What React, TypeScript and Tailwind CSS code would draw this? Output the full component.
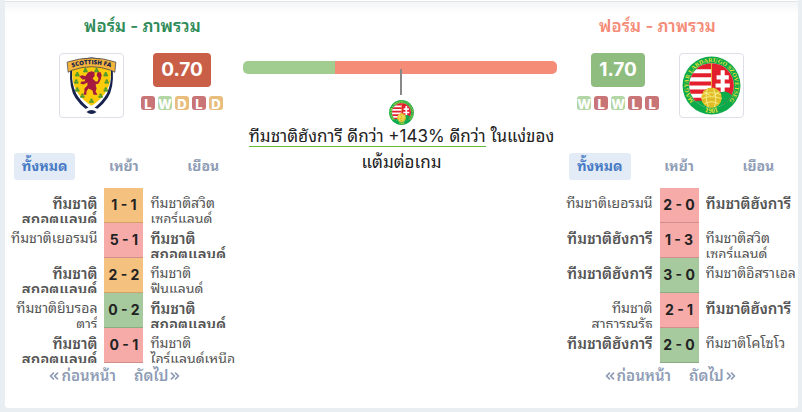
import clsx from 'clsx';
import { ChevronsLeft, ChevronsRight } from 'lucide-react';

type Result = 'W' | 'D' | 'L';

interface Match {
  home: string[];
  away: string[];
  score: string;
  result: Result;
  side: 'home' | 'away';
}

interface TeamFormProps {
  id: string;
  titleClass: string;
  points: string;
  pointsClass: string;
  form: Result[];
  logo: React.ReactNode;
  logoLast?: boolean;
  matches: Match[];
}

const badgeColors = {
  W: 'bg-[#b3d6a5]',
  D: 'bg-[#e9bd7c]',
  L: 'bg-[#c97577]',
};

const scoreColors = {
  W: 'bg-[#a6ca9e] border-[#89ad81]',
  D: 'bg-[#f5c17f] border-[#cfa26c]',
  L: 'bg-[#f6aba9] border-[#cf8f8d]',
};

const scotlandMatches: Match[] = [
  { home: ['ทีมชาติ', 'สกอตแลนด์'], away: ['ทีมชาติสวิต', 'เซอร์แลนด์'], score: '1 - 1', result: 'D', side: 'home' },
  { home: ['ทีมชาติเยอรมนี'], away: ['ทีมชาติ', 'สกอตแลนด์'], score: '5 - 1', result: 'L', side: 'away' },
  { home: ['ทีมชาติ', 'สกอตแลนด์'], away: ['ทีมชาติ', 'ฟินแลนด์'], score: '2 - 2', result: 'D', side: 'home' },
  { home: ['ทีมชาติยิบรอล', 'ตาร์'], away: ['ทีมชาติ', 'สกอตแลนด์'], score: '0 - 2', result: 'W', side: 'away' },
  { home: ['ทีมชาติ', 'สกอตแลนด์'], away: ['ทีมชาติ', 'ไอร์แลนด์เหนือ'], score: '0 - 1', result: 'L', side: 'home' },
];

const hungaryMatches: Match[] = [
  { home: ['ทีมชาติเยอรมนี'], away: ['ทีมชาติฮังการี'], score: '2 - 0', result: 'L', side: 'away' },
  { home: ['ทีมชาติฮังการี'], away: ['ทีมชาติสวิต', 'เซอร์แลนด์'], score: '1 - 3', result: 'L', side: 'home' },
  { home: ['ทีมชาติฮังการี'], away: ['ทีมชาติอิสราเอล'], score: '3 - 0', result: 'W', side: 'home' },
  { home: ['ทีมชาติ', 'สาธารณรัฐ'], away: ['ทีมชาติฮังการี'], score: '2 - 1', result: 'L', side: 'away' },
  { home: ['ทีมชาติฮังการี'], away: ['ทีมชาติโคโซโว'], score: '2 - 0', result: 'W', side: 'home' },
];

const clovers = [
  [25, 16], [36, 16], [17, 20], [45, 20], [16, 27], [46, 27], [17, 35], [45, 35], [22, 41], [40, 41], [31, 46],
];

function ScotlandLogo() {
  return (
    <svg viewBox="0 0 62 62" className="size-full" aria-hidden="true">
      <path d="M10 16Q9 34 15 43Q19 49 25 54L28 53Q20 46 16 39Q11 29 12 16ZM52 16Q53 34 47 43Q43 49 37 54L34 53Q42 46 46 39Q51 29 50 16Z" fill="#17234d" />
      <path d="M17 6Q31 1 45 6L45 9H17Z" fill="#17234d" />
      <path d="M12 14Q31 7 50 14Q51 30 44 39Q39 46 31 51Q23 46 18 39Q11 30 12 14Z" fill="#fccb0a" />
      {clovers.map(([x, y]) => (
        <g key={`${x}-${y}`} fill="#4c9a2e">
          <circle cx={x - 1} cy={y + 1} r="1.2" />
          <circle cx={x + 1} cy={y + 1} r="1.2" />
          <circle cx={x} cy={y - 1} r="1.2" />
        </g>
      ))}
      <path
        d="M28 18l3-1 3 1 0 4-2 2 3 3 2 0 1-3-2-3 1-3 3 0 1 3-1 4-2 4-3 1 1 4-1 3 2 3-4 0-1-4-4-2-2 3 0 3-3 0 1-3 0-3 3-3 0-3-4 2-3-1 1-2 3 0 1-2-3 0-3-3 3-1 3 1 2-3z"
        fill="#a4193d"
      />
      <path d="M7 8Q31 0 55 8L54 18L50 16Q31 9 12 16L8 18Z" fill="#f3b43c" stroke="#17234d" strokeWidth="0.6" />
      <path id="scottish-arc" d="M10 14Q31 6 52 14" fill="none" />
      <text className="font-['Open_Sans',sans-serif] text-[6px] font-extrabold" fill="#17234d" textAnchor="middle">
        <textPath href="#scottish-arc" startOffset="50%">SCOTTISH FA</textPath>
      </text>
      <path d="M26 57Q31 53 36 57Q31 61 26 57Z" fill="#17234d" />
    </svg>
  );
}

function HungaryLogo({ id }: { id: string }) {
  return (
    <svg viewBox="0 0 62 62" className="size-full" aria-hidden="true">
      <defs>
        <clipPath id={`${id}-shield`}>
          <circle cx="31" cy="31" r="22" />
        </clipPath>
        <path id={`${id}-ring`} d="M18 50A23 23 0 1 1 44 50" />
        <path id={`${id}-year`} d="M20 55Q31 61 42 55" />
      </defs>
      <circle cx="31" cy="31" r="28.5" fill="#0bab4b" />
      <g clipPath={`url(#${id}-shield)`}>
        <path d="M8 8h46v46H8z" fill="#fff" />
        <path d="M8 8h23v7H8zM8 19h23v4H8zM8 27h23v4H8zM8 35h23v4H8zM8 43h23v4H8zM31 8h24v42H31z" fill="#e31f2d" />
        <path d="M40 16h4v5h4v4h-4v4h5v4h-5v6h-4v-6h-5v-4h5v-4h-4v-4h4z" fill="#fff" />
        <path d="M32 45Q37 37 44 37Q50 38 54 44L46 56H16V46H32Z" fill="#0bab4b" />
      </g>
      <path d="M31 9v22" stroke="#e5cd38" strokeWidth="0.8" />
      <circle cx="31" cy="43" r="10" fill="#dfbd25" />
      <path
        d="M22 40q9-4 18 0M21 44q10-4 20 0M24 49q7-4 14 0M27 34q-3 9 1 18M33 34q4 9 1 18M23 37l7 4M39 37l-6 4"
        fill="none"
        stroke="#fff39b"
        strokeWidth="0.8"
      />
      <text className="font-['Liberation_Serif',serif] text-[6px] font-bold" fill="#e5df36" textAnchor="middle">
        <textPath href={`#${id}-ring`} startOffset="50%">MAGYAR LABDARUGO SZOVETSEG</textPath>
      </text>
      <text className="font-['Liberation_Serif',serif] text-[7px] font-bold" fill="#e5df36" textAnchor="middle">
        <textPath href={`#${id}-year`} startOffset="50%">1901</textPath>
      </text>
    </svg>
  );
}

function TeamName({ lines, bold, right }: { lines: string[]; bold: boolean; right?: boolean }) {
  return (
    <td className={clsx('p-0 align-top', right ? 'pr-[7px] text-right' : 'pl-[7px] text-left')}>
      <div
        className={clsx(
          'h-[35px] overflow-hidden whitespace-nowrap text-[#555]',
          bold ? 'pt-2 text-[15px] font-semibold' : 'pt-[7px] text-sm',
        )}
      >
        {lines.map((line) => (
          <div key={line} className="leading-4">{line}</div>
        ))}
      </div>
    </td>
  );
}

function TeamForm({ id, titleClass, points, pointsClass, form, logo, logoLast, matches }: TeamFormProps) {
  return (
    <section aria-labelledby={`${id}-title`} className="min-w-0">
      <h2 id={`${id}-title`} className={clsx('text-[17px] leading-6 font-semibold', titleClass)}>
        ฟอร์ม - ภาพรวม
      </h2>
      <div className={clsx('mt-[15px] flex items-start', logoLast ? 'flex-row-reverse justify-end gap-5 pl-[17px]' : 'gap-[17px] pl-[54px]')}>
        <div className="size-[65px] shrink-0 rounded border border-[#dcdfe8] bg-white">{logo}</div>
        <div className="flex flex-col items-center gap-[9px]">
          <span className={clsx('rounded px-2 text-[19px] leading-[34px] font-bold text-white', pointsClass)}>
            {points}
          </span>
          <ul className="flex gap-[3px]">
            {form.map((result, i) => (
              <li
                key={i}
                className={clsx(
                  'flex size-3.5 items-center justify-center rounded-[3px] pt-0.5 text-[13px] leading-3 font-extrabold text-white',
                  badgeColors[result],
                )}
              >
                {result}
              </li>
            ))}
          </ul>
        </div>
      </div>

      <div className="mt-[35px] grid grid-cols-3 justify-items-center text-sm leading-6 font-bold text-[#8e9cb5]">
        <button type="button" className="h-[27px] rounded-[3px] bg-[#e3ebf6] px-2 pb-0.5 text-[#467ac4]">ทั้งหมด</button>
        <button type="button" className="h-[27px] px-2 pb-0.5">เหย้า</button>
        <button type="button" className="h-[27px] px-2 pb-0.5">เยือน</button>
      </div>

      <table className="mt-2 w-full table-fixed border-collapse">
        <colgroup>
          <col />
          <col className="w-[39px]" />
          <col />
        </colgroup>
        <tbody>
          {matches.map((match, i) => (
            <tr key={i}>
              <TeamName lines={match.home} bold={match.side === 'home'} right />
              <td className="p-0">
                <div
                  className={clsx(
                    'h-[35px] border-b text-center text-sm leading-[34px] font-bold whitespace-nowrap text-[#222]',
                    scoreColors[match.result],
                  )}
                >
                  {match.score}
                </div>
              </td>
              <TeamName lines={match.away} bold={match.side === 'away'} />
            </tr>
          ))}
        </tbody>
      </table>

      <div className="flex justify-center gap-[18px] pt-[3px] pr-[18px] text-[15px] leading-5 font-semibold text-[#8e9cb5]">
        <button type="button" className="flex items-center">
          <ChevronsLeft size={14} strokeWidth={3} />
          ก่อนหน้า
        </button>
        <button type="button" className="flex items-center">
          ถัดไป
          <ChevronsRight size={14} strokeWidth={3} />
        </button>
      </div>
    </section>
  );
}

export default function App() {
  return (
    <div className="bg-[#e9eef2] pr-1 pb-1 pl-[5px] font-['Inter','Noto_Sans_Thai_Looped','Leelawadee_UI','Loma','Waree',sans-serif]">
      <div className="h-px bg-white" />
      <main className="grid grid-cols-[3fr_4fr_3fr] rounded-b border-t border-[#e0e5e9] bg-white bg-linear-to-b from-[#f3f5f6] to-white to-[12px] pt-[12px] pb-[22px]">
        <TeamForm
          id="scotland"
          titleClass="pl-[79px] text-[#2e8b57]"
          points="0.70"
          pointsClass="bg-[#c95f47]"
          form={['L', 'W', 'D', 'L', 'D']}
          logo={<ScotlandLogo />}
          matches={scotlandMatches}
        />

        <section className="min-w-0 pt-[47px] text-center">
          <div className="mr-[3px] flex h-[13px] overflow-hidden rounded-[5px]">
            <div style={{ width: `${(0.7 / (0.7 + 1.7)) * 100}%` }} className="bg-[#a1cd90]" />
            <div className="flex-1 bg-[#f58c78]" />
          </div>
          <div className="relative mx-auto -mt-[5px] h-[26px] w-0.5 bg-[#888]" />
          <div className="mx-auto mt-1 size-[27px]">
            <HungaryLogo id="hungary-small" />
          </div>
          <p className="-mt-[3px] text-[17px] leading-[26px] text-[#222]">
            <span className="border-b border-b-[#66bb33]">ทีมชาติฮังการี ดีกว่า +143% ดีกว่า</span> ในแง่ของ
            <br />
            แต้มต่อเกม
          </p>
        </section>

        <TeamForm
          id="hungary"
          titleClass="pl-[39px] text-[#f58c78]"
          points="1.70"
          pointsClass="bg-[#8fbc7f]"
          form={['W', 'L', 'W', 'L', 'L']}
          logo={<HungaryLogo id="hungary-large" />}
          logoLast
          matches={hungaryMatches}
        />
      </main>
    </div>
  );
}
